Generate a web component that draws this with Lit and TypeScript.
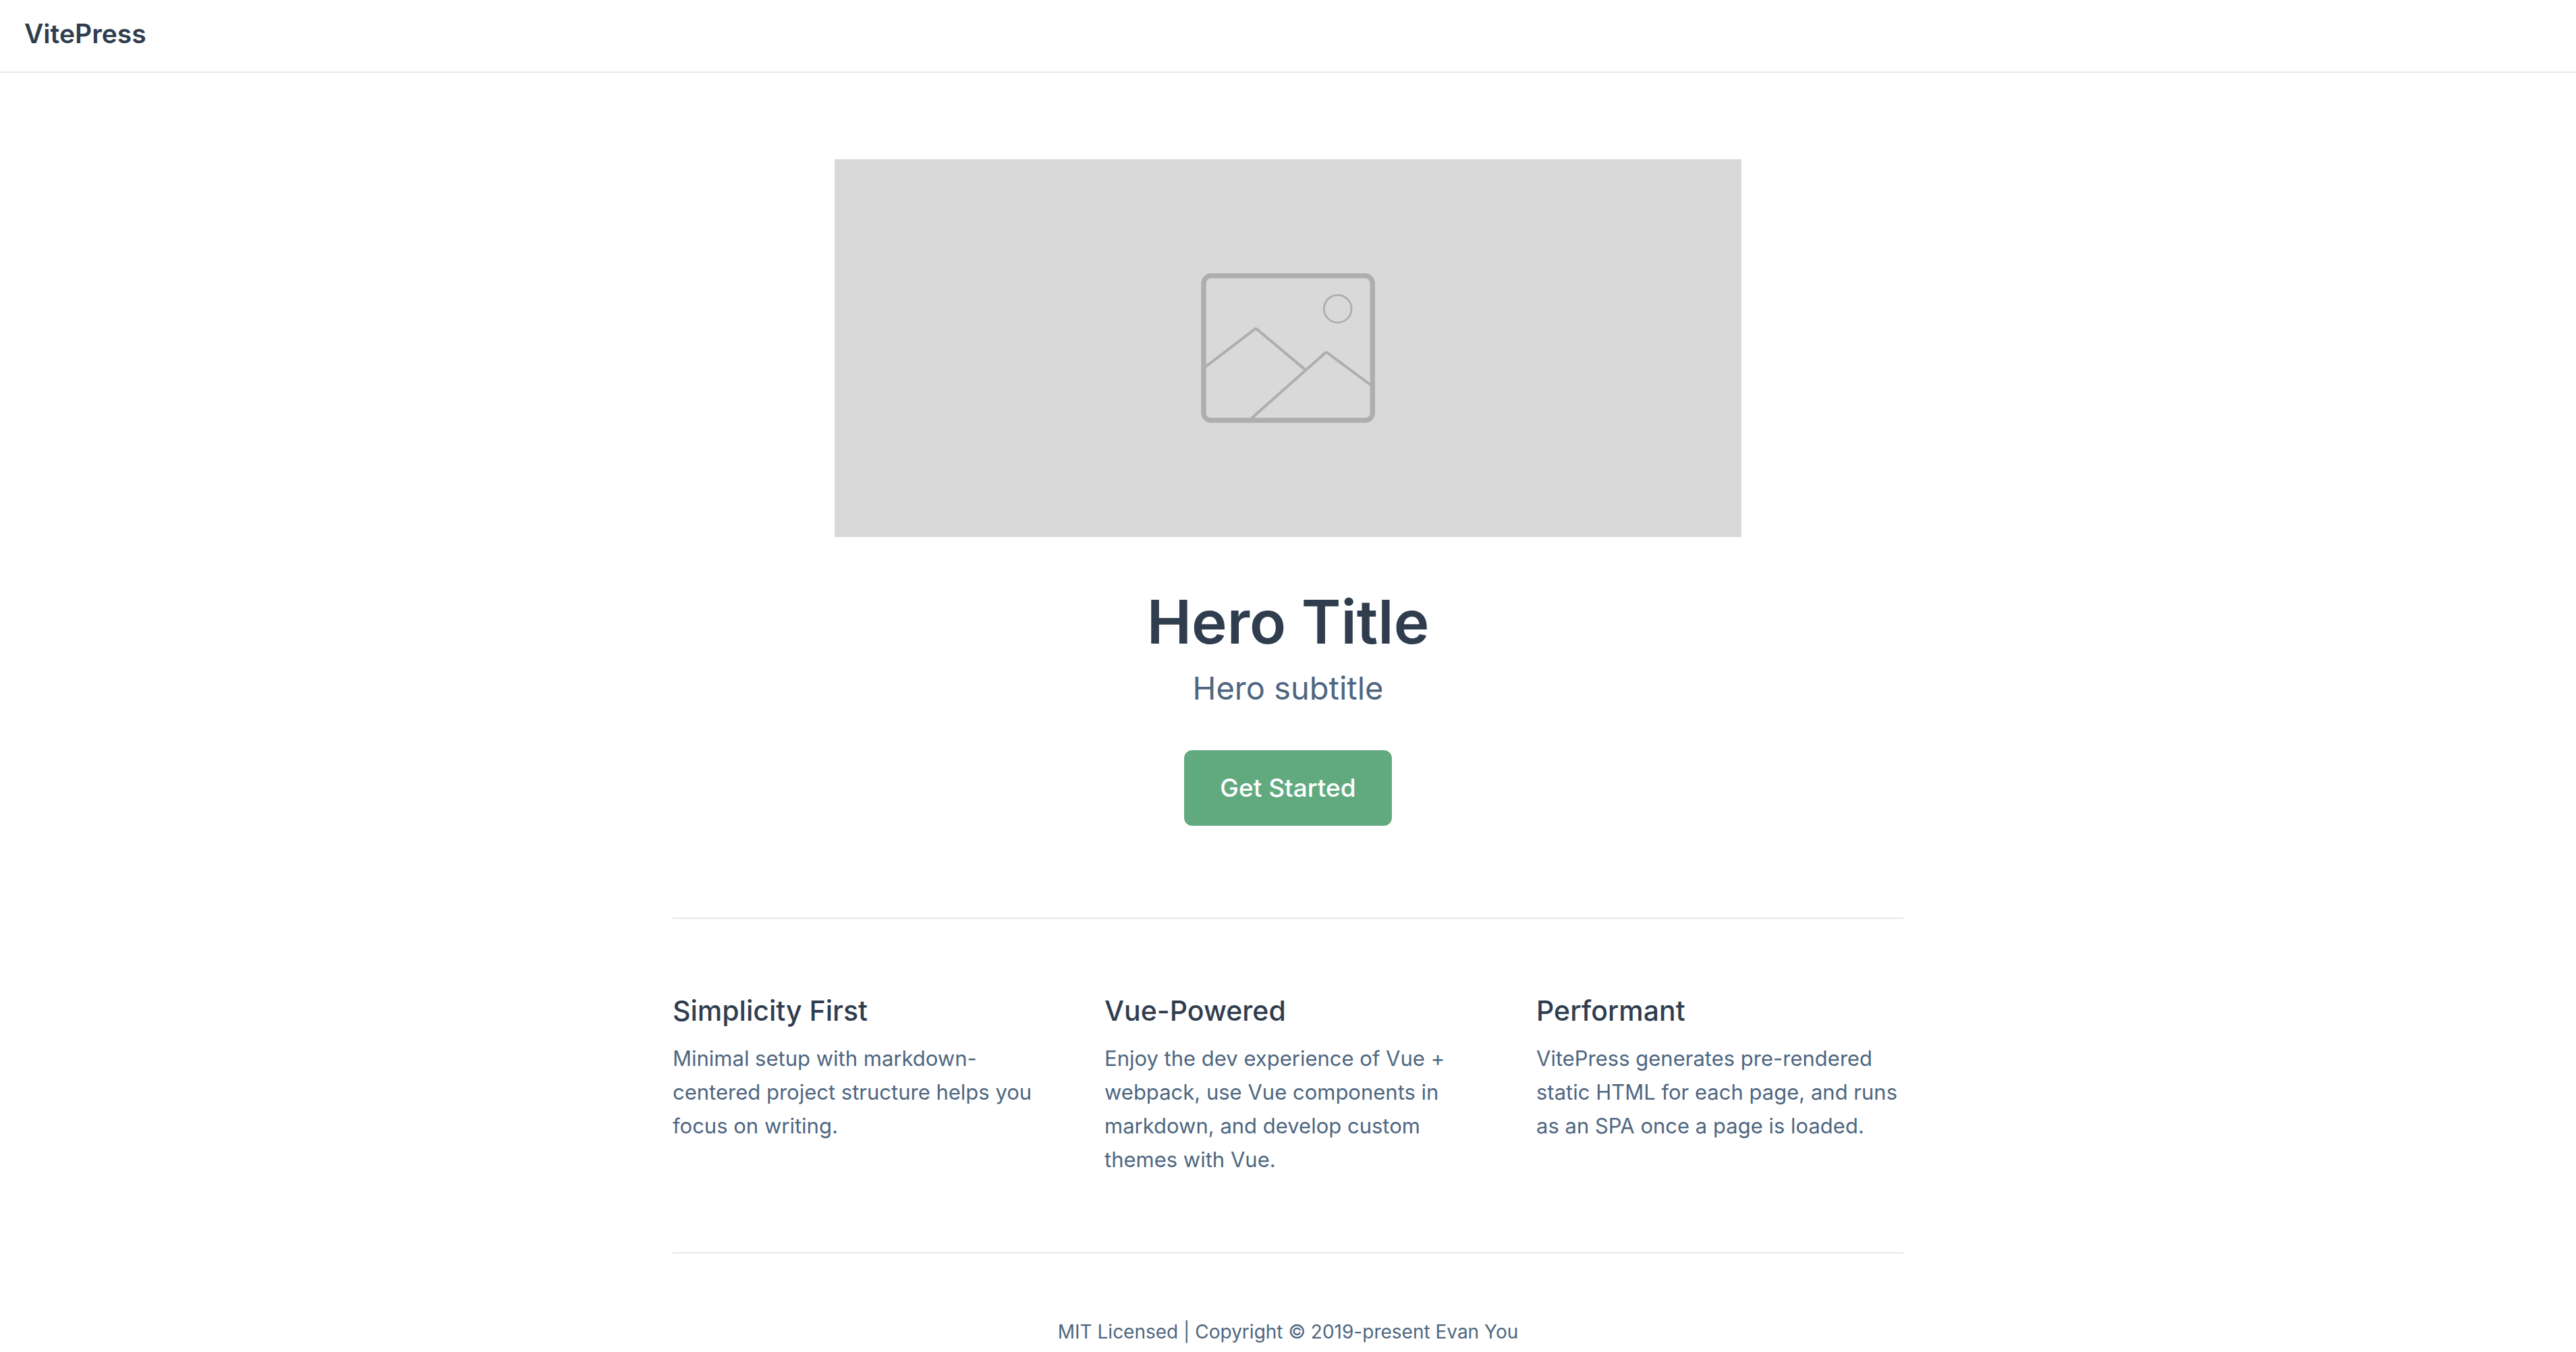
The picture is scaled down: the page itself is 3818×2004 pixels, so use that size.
import { LitElement, html, css } from "lit";
import { customElement } from "lit/decorators.js";

interface Feature {
  title: string;
  details: string;
}

const features: Feature[] = [
  {
    title: "Simplicity First",
    details:
      "Minimal setup with markdown-centered project structure helps you focus on writing.",
  },
  {
    title: "Vue-Powered",
    details:
      "Enjoy the dev experience of Vue + webpack, use Vue components in markdown, and develop custom themes with Vue.",
  },
  {
    title: "Performant",
    details:
      "VitePress generates pre-rendered static HTML for each page, and runs as an SPA once a page is loaded.",
  },
];

@customElement("app-root")
export class AppRoot extends LitElement {
  static styles = css`
    :host {
      --c-text: #303d4e;
      --c-text-light: #4e6680;
      --c-brand: #61aa80;
      --c-divider: #e6e6e6;
      display: block;
      background: #fff;
      color: var(--c-text);
      font-family: Inter, "Liberation Sans", sans-serif;
    }

    h1,
    h2,
    p {
      margin: 0;
    }

    .nav {
      display: flex;
      padding: 24px 36px 30px;
      border-bottom: 2px solid var(--c-divider);
    }

    .brand {
      color: inherit;
      font-size: 39px;
      font-weight: 600;
      line-height: 52px;
      text-decoration: none;
    }

    .home {
      max-width: 1824px;
      margin: 0 auto;
      padding-top: 128px;
    }

    .hero {
      display: flex;
      flex-direction: column;
      align-items: center;
      text-align: center;
    }

    .hero-image {
      display: block;
      width: 100%;
      max-width: 1344px;
      height: auto;
      background: #d9d9d9;
    }

    .hero-title {
      margin-top: 66px;
      font-size: 89px;
      font-weight: 600;
      line-height: 120px;
    }

    .hero-subtitle {
      margin-top: 6px;
      color: var(--c-text-light);
      font-size: 47px;
      line-height: 64px;
    }

    .action {
      margin-top: 60px;
      padding: 32px 53px;
      border-radius: 12px;
      background: var(--c-brand);
      color: #fff;
      font-size: 37px;
      font-weight: 500;
      line-height: 48px;
      text-decoration: none;
    }

    .features {
      display: grid;
      grid-template-columns: repeat(3, 1fr);
      gap: 96px;
      margin-top: 136px;
      padding: 108px 0 112px;
      border-top: 2px solid var(--c-divider);
    }

    .feature-title {
      font-size: 41px;
      font-weight: 500;
      line-height: 56px;
    }

    .feature-details {
      margin-top: 18px;
      color: var(--c-text-light);
      font-size: 31px;
      line-height: 50px;
    }

    .footer {
      padding: 94px 0 8px;
      border-top: 2px solid var(--c-divider);
      color: var(--c-text-light);
      font-size: 28px;
      line-height: 44px;
      text-align: center;
    }
  `;

  private renderPlaceholder() {
    return html`
      <svg
        class="hero-image"
        viewBox="0 0 1344 560"
        fill="none"
        stroke="#aeaeae"
        stroke-linejoin="round"
        aria-hidden="true"
      >
        <rect x="547" y="172.8" width="250.3" height="214.2" rx="11" stroke-width="7.4" />
        <circle cx="745.7" cy="221.7" r="20.4" stroke-width="2.8" />
        <path d="M549 308.2 L622.8 251.9 Q624.3 250.9 625.8 251.9 L698 312.4" stroke-width="4" />
        <path d="M618 384 L727.2 287 Q728.7 286 730.2 286.8 L795 335" stroke-width="4" />
      </svg>
    `;
  }

  render() {
    return html`
      <header class="nav">
        <a class="brand" href="/">VitePress</a>
      </header>
      <main class="home">
        <section class="hero">
          ${this.renderPlaceholder()}
          <h1 class="hero-title">Hero Title</h1>
          <p class="hero-subtitle">Hero subtitle</p>
          <a class="action" href="/guide/">Get Started</a>
        </section>
        <section class="features">
          ${features.map(
            (feature) => html`
              <article>
                <h2 class="feature-title">${feature.title}</h2>
                <p class="feature-details">${feature.details}</p>
              </article>
            `
          )}
        </section>
        <footer class="footer">
          MIT Licensed | Copyright © 2019-present Evan You
        </footer>
      </main>
    `;
  }
}
